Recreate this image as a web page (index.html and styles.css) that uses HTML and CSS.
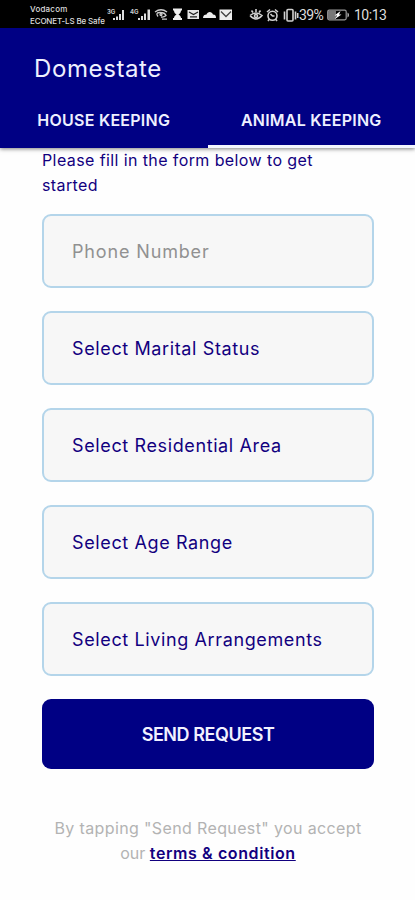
FILE: index.html
```
<!DOCTYPE html>
<html lang="en">
<head>
    <meta charset="UTF-8">
    <meta name="viewport" content="width=device-width, initial-scale=1.0">
    <title>Domestate</title>
    <link rel="stylesheet" href="styles.css">
</head>
<body>
    <div class="status-bar">
        <div class="carriers">
            <div class="carrier">Vodacom</div>
            <div class="carrier econet">ECONET-LS Be Safe</div>
        </div>
        <svg class="status-icons" width="126" height="16" viewBox="0 0 126 16">
            <!-- signal bars -->
            <g fill="#ddd">
                <path d="M6 12h2v2H6zM9 10.500h2V14H9zM12 8h2v6h-2zM15 4h2v10h-2z"/>
                <path d="M31 12h2v2h-2zM34 10h2v4h-2zM37 7.500h2V14h-2zM40.500 3.500h2.500V14h-2.500z"/>
            </g>
            <text x="0" y="8" class="net">3G</text>
            <text x="23" y="8" class="net">4G</text>
            <!-- wifi calling -->
            <g fill="none" stroke="#ccc" stroke-width="1.300">
                <path d="M48 6q6-4.500 12 0M51 10.500q-3-4 2-4t6 3q-2 2-5 1.500M55 13.200h5"/>
                <circle cx="54" cy="8.500" r="1"/>
            </g>
            <!-- hourglass -->
            <path d="M66 2.500h9v2h-1c0 2-1 3-2.500 4 1.500 1 2.500 2 2.500 3.500h1v2h-9v-2h1c0-1.500 1-2.500 2.500-3.500C68 7.500 67 6.500 67 4.500h-1z" fill="#eee"/>
            <!-- mail -->
            <path d="M80.500 4H92v9H80.500z" fill="#e8e8e8"/>
            <path d="M82 6l4.500 2.500L91 6M83 10.800h7" fill="none" stroke="#222" stroke-width="1.200"/>
            <!-- cloud -->
            <path d="M96 12c0-2.500 1.500-3.500 3.500-3.500C100.500 5 105 5 106 8.500c2.500 0 3 1.500 3 3.500z" fill="#eee"/>
            <!-- mail -->
            <path d="M112.500 3.500H125v10.500h-12.500z" fill="#eee"/>
            <path d="M114 5.500l5 5 5-5" fill="none" stroke="#444" stroke-width="1.300"/>
        </svg>
        <div class="status-right">
            <svg width="50" height="16" viewBox="0 0 50 16" fill="none" stroke="#d0d0d0" stroke-width="1.600">
                <!-- eye -->
                <path d="M1 8.500q6-5 12 0-6 7-12 0M2.500 3.500l1.500 2M7 2v3M11.500 3.500l-1.500 2"/>
                <circle cx="7" cy="9" r="1.500"/>
                <!-- alarm -->
                <circle cx="23.500" cy="8.700" r="4.500"/>
                <path d="M18 5l3-2.500M29 5l-3-2.500M21.500 7l2 2h2M20.500 12l-1.500 2M26.500 12l1.500 2"/>
                <!-- vibrate -->
                <rect x="38" y="2.500" width="6" height="11.500" rx="1"/>
                <path d="M35.500 4.500v8M46.500 4.500v8M48.700 6v5"/>
            </svg>
            <span class="percent">39%</span>
            <svg class="battery" width="23" height="12" viewBox="0 0 23 12">
                <rect x="0.700" y="1.200" width="18.500" height="9.600" rx="1.500" fill="none" stroke="#999" stroke-width="1.200"/>
                <path d="M1 2h8v8H1z" fill="#777"/>
                <path d="M20.500 3.500c2 1 2 4 0 5z" fill="#bbb"/>
                <path d="M13.500 2L7.500 6.500h2.500L8 10l6.500-4.500H12z" fill="#fff"/>
            </svg>
            <span class="clock">10:13</span>
        </div>
    </div>

    <header class="app-header">
        <h1>Domestate</h1>
        <nav class="tabs">
            <a class="tab">HOUSE KEEPING</a>
            <a class="tab active">ANIMAL KEEPING</a>
        </nav>
    </header>

    <main class="form">
        <p class="intro">Please fill in the form below to get<br>started</p>
        <div class="field placeholder">Phone Number</div>
        <div class="field">Select Marital Status</div>
        <div class="field">Select Residential Area</div>
        <div class="field">Select Age Range</div>
        <div class="field">Select Living Arrangements</div>
        <button class="send">SEND REQUEST</button>
        <p class="terms"><span class="accept">By tapping "Send Request" you accept</span><br>our <a>terms &amp; condition</a></p>
    </main>
</body>
</html>
```
FILE: styles.css
```
* {
    box-sizing: border-box;
}
body {
    margin: 0;
    height: 900px;
    overflow: hidden;
    background-color: #fefefe;
    color: #12007f;
    font-family: Inter, "Open Sans", sans-serif;
}
.status-bar {
    display: flex;
    height: 28px;
    padding-left: 30px;
    background-color: #000;
    color: #ddd;
}
.carriers {
    width: 77px;
    padding-top: 3px;
    font-size: 8px;
    line-height: 12px;
    font-weight: 500;
    letter-spacing: 0.2px;
    white-space: nowrap;
}
.econet {
    letter-spacing: -0.15px;
}
.status-icons {
    flex: none;
    margin-top: 6px;
}
.net {
    fill: #ccc;
    font-size: 6px;
    font-weight: bold;
}
.status-right {
    display: flex;
    align-items: center;
    height: 29px;
    margin-left: 16px;
    font-family: Roboto, sans-serif;
    font-size: 14px;
    white-space: nowrap;
}
.percent {
    width: 28px;
    letter-spacing: -0.6px;
}
.battery {
    flex: none;
}
.clock {
    margin-left: 4px;
    letter-spacing: -0.5px;
}
.app-header {
    position: relative;
    height: 120px;
    background-color: #000084;
    color: #eef0ff;
    box-shadow: 0 1px 4px rgba(0, 0, 0, 0.5);
}
h1 {
    margin: 0;
    padding: 25px 0 0 34px;
    font-size: 24px;
    line-height: 32px;
    font-weight: 400;
    letter-spacing: 0.6px;
}
.tabs {
    display: flex;
    height: 63px;
}
.tab {
    display: flex;
    justify-content: center;
    width: 208px;
    padding-top: 24px;
    font-size: 16px;
    line-height: 22px;
    font-weight: 600;
    letter-spacing: 0.25px;
    white-space: nowrap;
}
.tab.active {
    border-bottom: 3px solid #f4f6ff;
}
.form {
    padding: 0 41px 0 42px;
}
.intro {
    margin: 0 0 16px;
    font-size: 16px;
    line-height: 25px;
    letter-spacing: 0.4px;
    white-space: nowrap;
}
.field {
    display: flex;
    align-items: center;
    height: 74px;
    margin-bottom: 23px;
    padding-left: 28px;
    border: 2px solid #b4d5ea;
    border-radius: 9px;
    background-color: #f7f7f7;
    font-size: 18px;
    letter-spacing: 0.62px;
    white-space: nowrap;
}
.placeholder {
    color: #919191;
    letter-spacing: 0.85px;
}
.send {
    display: block;
    width: 100%;
    height: 70px;
    padding: 0;
    border: none;
    border-radius: 9px;
    background-color: #000084;
    color: #f1f1ff;
    font-family: inherit;
    font-size: 18px;
    font-weight: 600;
    letter-spacing: -0.45px;
}
.terms {
    margin: 47px 0 0;
    color: #b3b3b3;
    font-size: 16px;
    line-height: 25px;
    text-align: center;
    white-space: nowrap;
}
.accept {
    letter-spacing: 0.37px;
}
.terms a {
    color: #12007f;
    font-weight: 600;
    letter-spacing: 0.6px;
    text-decoration: underline;
}
```
